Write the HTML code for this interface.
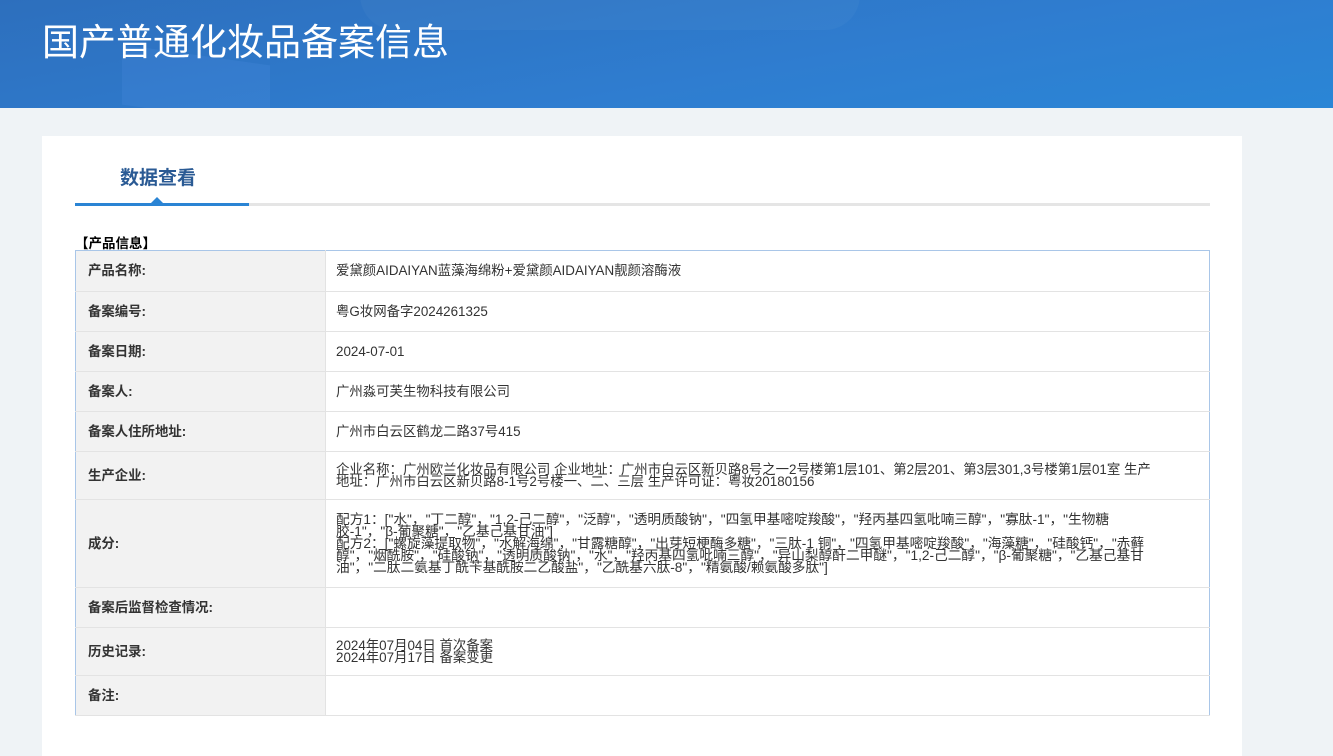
<!DOCTYPE html>
<html><head><meta charset="utf-8"><style>
*{margin:0;padding:0;box-sizing:border-box}
body{width:1333px;height:732px;overflow:hidden;background:#eff3f6;font-family:"Liberation Sans","Noto Sans CJK SC",sans-serif;color:#333}
.hd{height:108px;background:linear-gradient(170deg,#2d6fbd 0%,#2f7dd0 60%,#2a86d6 100%);position:relative;overflow:hidden}
.hd .s1{position:absolute;left:122px;top:55px;width:148px;height:60px;background:rgba(90,150,235,.18);transform:skewY(8deg)}
.hd .s2{position:absolute;left:360px;top:-40px;width:500px;height:70px;border-radius:40px;background:rgba(255,255,255,.03)}
.hd h1{position:absolute;left:42px;top:12px;font-size:37px;font-weight:normal;color:#fff}
.box{position:absolute;left:42px;top:136px;width:1200px;height:620px;background:#fff}
.tab{position:absolute;left:33px;top:27px;width:166px;text-align:center;font-size:19px;font-weight:bold;color:#2a5a94}
.line{position:absolute;left:33px;top:67px;width:1135px;height:3px;background:#e5e5e5}
.line i{position:absolute;left:0;top:0;width:174px;height:3px;background:#2a84d4}
.tri{position:absolute;left:109px;top:61px;width:0;height:0;border-left:6px solid transparent;border-right:6px solid transparent;border-bottom:6px solid #2a84d4}
.cap{position:absolute;left:33px;top:96px;font-size:13.5px;font-weight:bold;color:#000}
table{position:absolute;left:33px;top:114px;width:1135px;border-collapse:collapse;border:1px solid #a9c6e8;font-size:13.4px}
td{border-bottom:1px solid #e3e3e3;vertical-align:middle;line-height:12px}
td.l{width:250px;background:#f2f2f2;font-weight:bold;padding-left:12px;border-right:1px solid #e3e3e3}
td.v{padding-left:10px;padding-right:4px;white-space:nowrap}
.ing{font-size:13.7px}
</style></head><body>
<div class="hd"><div class="s1"></div><div class="s2"></div><h1>国产普通化妆品备案信息</h1></div>
<div class="box">
<div class="tab">数据查看</div>
<div class="line"><i></i></div><div class="tri"></div>
<div class="cap">【产品信息】</div>
<table>
<tr style="height:41px"><td class="l">产品名称:</td><td class="v">爱黛颜AIDAIYAN蓝藻海绵粉+爱黛颜AIDAIYAN靓颜溶酶液</td></tr>
<tr style="height:40px"><td class="l">备案编号:</td><td class="v">粤G妆网备字2024261325</td></tr>
<tr style="height:40px"><td class="l">备案日期:</td><td class="v">2024-07-01</td></tr>
<tr style="height:40px"><td class="l">备案人:</td><td class="v">广州淼可芙生物科技有限公司</td></tr>
<tr style="height:40px"><td class="l">备案人住所地址:</td><td class="v">广州市白云区鹤龙二路37号415</td></tr>
<tr style="height:48px"><td class="l">生产企业:</td><td class="v">企业名称：广州欧兰化妆品有限公司 企业地址：广州市白云区新贝路8号之一2号楼第1层101、第2层201、第3层301,3号楼第1层01室 生产<br>地址：广州市白云区新贝路8-1号2号楼一、二、三层 生产许可证：粤妆20180156</td></tr>
<tr style="height:88px"><td class="l">成分:</td><td class="v ing">配方1：["水"，"丁二醇"，"1,2-己二醇"，"泛醇"，"透明质酸钠"，"四氢甲基嘧啶羧酸"，"羟丙基四氢吡喃三醇"，"寡肽-1"，"生物糖<br>胶-1"，"β-葡聚糖"，"乙基己基甘油"]<br>配方2：["螺旋藻提取物"，"水解海绵"，"甘露糖醇"，"出芽短梗酶多糖"，"三肽-1 铜"，"四氢甲基嘧啶羧酸"，"海藻糖"，"硅酸钙"，"赤藓<br>醇"，"烟酰胺"，"硅酸钠"，"透明质酸钠"，"水"，"羟丙基四氢吡喃三醇"，"异山梨醇酐二甲醚"，"1,2-己二醇"，"β-葡聚糖"，"乙基己基甘<br>油"，"二肽二氨基丁酰苄基酰胺二乙酸盐"，"乙酰基六肽-8"，"精氨酸/赖氨酸多肽"]</td></tr>
<tr style="height:40px"><td class="l">备案后监督检查情况:</td><td class="v"></td></tr>
<tr style="height:48px"><td class="l">历史记录:</td><td class="v">2024年07月04日 首次备案<br>2024年07月17日 备案变更</td></tr>
<tr style="height:40px"><td class="l">备注:</td><td class="v"></td></tr>
</table>
</div>
</body></html>
